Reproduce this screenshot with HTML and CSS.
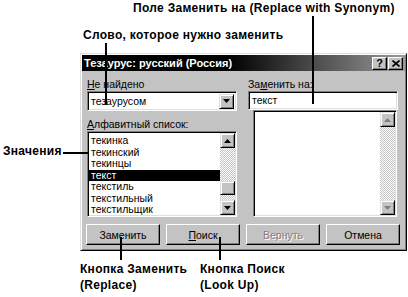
FILE: index.html
```html
<!DOCTYPE html>
<html>
<head>
<meta charset="UTF-8">
<title>Тезаурус</title>
<link rel="stylesheet" href="styles.css">
</head>
<body>
<div class="page">
  <div class="note note-top">Поле Заменить на (Replace with Synonym)</div>
  <div class="note note-word">Слово, которое нужно заменить</div>

  <div class="dialog">
    <div class="titlebar">
      <span class="title">Тезаурус: русский (Россия)</span>
      <span class="title-btn">?</span>
      <span class="title-btn">
        <svg width="8" height="7" viewBox="0 0 8 7"><path d="M0.5 0.5 L7.5 6.5 M7.5 0.5 L0.5 6.5" stroke="#000" stroke-width="1.6"/></svg>
      </span>
    </div>

    <div class="dialog-body">
      <div class="columns">
        <div class="col">
          <div class="label"><u>Н</u>е найдено</div>
          <div class="combo">
            <span class="combo-text">тезаурусом</span>
            <span class="arrow-btn"><svg width="7" height="4" viewBox="0 0 7 4"><polygon points="0,0 7,0 3.5,4" fill="#000"/></svg></span>
          </div>
          <div class="label label-list"><u>А</u>лфавитный список:</div>
          <div class="listbox">
            <ul class="items">
              <li>текинка</li>
              <li>текинский</li>
              <li>текинцы</li>
              <li class="selected">текст</li>
              <li>текстиль</li>
              <li>текстильный</li>
              <li>текстильщик</li>
            </ul>
            <div class="scrollbar">
              <span class="arrow-btn"><svg width="7" height="4" viewBox="0 0 7 4"><polygon points="0,4 7,4 3.5,0" fill="#000"/></svg></span>
              <div class="track"><span class="thumb"></span></div>
              <span class="arrow-btn"><svg width="7" height="4" viewBox="0 0 7 4"><polygon points="0,0 7,0 3.5,4" fill="#000"/></svg></span>
            </div>
          </div>
        </div>

        <div class="col">
          <div class="label">За<u>м</u>енить на:</div>
          <div class="field">текст</div>
          <div class="listbox listbox-right">
            <ul class="items"></ul>
            <div class="scrollbar">
              <span class="arrow-btn"><svg width="7" height="4" viewBox="0 0 7 4"><polygon points="0,4 7,4 3.5,0" fill="#808080"/></svg></span>
              <div class="track"></div>
              <span class="arrow-btn"><svg width="7" height="4" viewBox="0 0 7 4"><polygon points="0,0 7,0 3.5,4" fill="#808080"/></svg></span>
            </div>
          </div>
        </div>
      </div>

      <div class="buttons">
        <span class="btn">Заменить</span>
        <span class="btn"><u>П</u>оиск</span>
        <span class="btn disabled">Вернуть</span>
        <span class="btn">Отмена</span>
      </div>
    </div>
  </div>

  <div class="notes-bottom">
    <div class="note note-replace">Кнопка Заменить<br>(Replace)</div>
    <div class="note">Кнопка Поиск<br>(Look Up)</div>
  </div>

  <div class="note note-meaning">Значения</div>

  <span class="line line-synonym"></span>
  <span class="line line-word"></span>
  <span class="line line-meaning"></span>
  <span class="line line-replace"></span>
  <span class="line line-lookup"></span>
</div>
</body>
</html>
```

FILE: styles.css
```css
body {
  margin: 0;
  background-color: #fff;
}

.page {
  position: relative;
  width: 408px;
  height: 297px;
  overflow: hidden;
  font-family: "Liberation Sans", Arial, sans-serif;
}

/* callout captions */
.note {
  font-size: 12px;
  font-weight: bold;
  line-height: 16px;
  letter-spacing: 0.3px;
  color: #000;
  white-space: nowrap;
}

.note-top {
  padding-left: 133px;
}

.note-word {
  margin-top: 11px;
  padding-left: 83px;
}

.notes-bottom {
  display: flex;
  margin-top: 10px;
  padding-left: 80px;
}

.note-replace {
  width: 120px;
}

.note-meaning {
  position: absolute;
  left: 3px;
  top: 143px;
}

.line {
  position: absolute;
  background-color: #000;
}

.line-synonym {
  left: 312px;
  top: 16px;
  width: 2px;
  height: 88px;
}

.line-word {
  left: 105px;
  top: 43px;
  width: 2px;
  height: 62px;
}

.line-meaning {
  left: 63px;
  top: 152px;
  width: 25px;
  height: 2px;
}

.line-replace {
  left: 120px;
  top: 237px;
  width: 2px;
  height: 23px;
}

.line-lookup {
  left: 219px;
  top: 237px;
  width: 2px;
  height: 23px;
}

/* dialog window */
.dialog {
  margin-top: 10px;
  margin-left: 80px;
  width: 323px;
  height: 194px;
  padding: 1px;
  background-color: #c3c3c3;
  border: 1px solid;
  border-color: #dfdfdf #000 #000 #dfdfdf;
  box-shadow: inset 1px 1px #fff, inset -1px -1px #808080;
  font-size: 10.5px;
}

.titlebar {
  display: flex;
  align-items: center;
  height: 16px;
  padding: 0 2px;
  background: linear-gradient(to right, #000 0%, #000 45%, #9a9a9a 100%);
}

.title {
  flex: 1;
  color: #fff;
  font-weight: bold;
  font-size: 11px;
}

.title-btn {
  display: flex;
  align-items: center;
  justify-content: center;
  width: 13px;
  height: 11px;
  margin-left: 1px;
  background-color: #c3c3c3;
  border: 1px solid;
  border-color: #fff #000 #000 #fff;
  box-shadow: inset -1px -1px #808080;
  font-weight: bold;
  font-size: 11px;
  line-height: 11px;
}

.dialog-body {
  padding: 7px 4px 0 4px;
}

.columns {
  display: flex;
  gap: 11px;
  padding-left: 1px;
}

.col {
  width: 150px;
}

.label {
  height: 12px;
  line-height: 12px;
}

.label-list {
  margin-top: 7px;
}

.combo,
.field,
.listbox {
  background-color: #fff;
  border: 1px solid;
  border-color: #808080 #fff #fff #808080;
  box-shadow: inset 1px 1px #000, inset -1px -1px #dfdfdf;
}

.combo {
  display: flex;
  align-items: center;
  margin-top: 1px;
  height: 16px;
  padding: 1px 2px 1px 3px;
}

.combo-text {
  flex: 1;
}

.field {
  margin-top: 1px;
  height: 15px;
  line-height: 15px;
  padding: 1px 3px;
}

.listbox {
  display: flex;
  margin-top: 1px;
  height: 82px;
  padding: 1px;
}

.listbox-right {
  margin-top: 0;
  margin-left: 5px;
  margin-right: 1px;
  height: 103px;
}

.items {
  flex: 1;
  list-style: none;
  margin: 0;
  padding: 2px 0 0 0;
}

.items li {
  height: 11.5px;
  line-height: 11.5px;
  padding-left: 2px;
}

.items .selected {
  background-color: #000;
  color: #fff;
}

.arrow-btn {
  display: flex;
  align-items: center;
  justify-content: center;
  width: 13px;
  height: 13px;
  background-color: #c3c3c3;
  border: 1px solid;
  border-color: #dfdfdf #000 #000 #dfdfdf;
  box-shadow: inset 1px 1px #fff, inset -1px -1px #808080;
}

.scrollbar {
  display: flex;
  flex-direction: column;
  width: 15px;
}

.track {
  flex: 1;
  background: repeating-conic-gradient(#c3c3c3 0 25%, #fff 0 50%) 0 0 / 2px 2px;
}

.thumb {
  display: block;
  margin-top: 33px;
  height: 12px;
  background-color: #c3c3c3;
  border: 1px solid;
  border-color: #dfdfdf #000 #000 #dfdfdf;
  box-shadow: inset 1px 1px #fff, inset -1px -1px #808080;
}

.buttons {
  display: flex;
  justify-content: space-between;
  margin-top: 7px;
  padding-right: 1px;
}

.btn {
  display: flex;
  align-items: center;
  justify-content: center;
  width: 72px;
  height: 19px;
  background-color: #c3c3c3;
  border: 1px solid;
  border-color: #fff #000 #000 #fff;
  box-shadow: inset -1px -1px #808080;
}

.btn.disabled {
  color: #808080;
  text-shadow: 1px 1px #fff;
}
```
